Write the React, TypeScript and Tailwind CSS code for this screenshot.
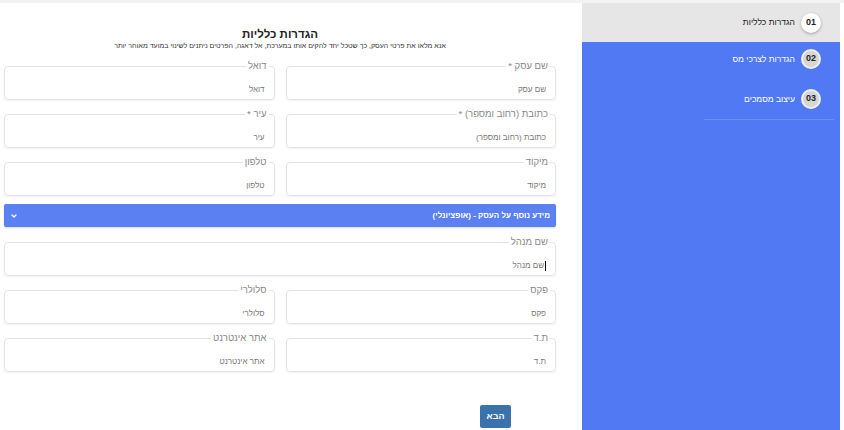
import React from "react";

type Field = { label: string; placeholder: string; required?: boolean; focused?: boolean };

const OutlinedField = ({ label, placeholder, required, focused }: Field) => (
    <fieldset className="h-[40px] rounded-[4px] border border-[#e3e3e3] pr-[5px] pl-2 shadow-[0_1px_2px_rgba(0,0,0,0.06)]">
        <legend className="px-[2px] text-[9.5px] leading-[12px] text-[#888]">
            {label}
            {required && " *"}
        </legend>
        <div className="flex justify-start pt-[13px] pr-[4px] text-[8px] leading-[10px] text-[#777]">
            <span className={focused ? "border-r border-black pr-[1px]" : ""}>{placeholder}</span>
        </div>
    </fieldset>
);

const StepItem = ({ num, title, active }: { num: string; title: string; active?: boolean }) => (
    <div className="flex items-center gap-[6px] pr-[19px]">
        <div
            className={
                active
                    ? "flex h-[20px] w-[20px] items-center justify-center rounded-full bg-white text-[9px] font-bold text-[#222] shadow-[0_1px_3px_rgba(0,0,0,0.3)]"
                    : "flex h-[20px] w-[20px] items-center justify-center rounded-full border-2 border-[#eef0f6] bg-[#d6d6d6] text-[9px] font-bold text-[#222]"
            }
        >
            {num}
        </div>
        <span className={active ? "text-[8.5px] text-[#222]" : "text-[8.5px] text-white"}>{title}</span>
    </div>
);

const App = () => {
    const topFields: Field[][] = [
        [
            { label: "שם עסק", placeholder: "שם עסק", required: true },
            { label: "דואל", placeholder: "דואל" },
        ],
        [
            { label: "כתובת (רחוב ומספר)", placeholder: "כתובת (רחוב ומספר)", required: true },
            { label: "עיר", placeholder: "עיר", required: true },
        ],
        [
            { label: "מיקוד", placeholder: "מיקוד" },
            { label: "טלפון", placeholder: "טלפון" },
        ],
    ];

    const extraFields: Field[][] = [
        [
            { label: "פקס", placeholder: "פקס" },
            { label: "סלולרי", placeholder: "סלולרי" },
        ],
        [
            { label: "ת.ד", placeholder: "ת.ד" },
            { label: "אתר אינטרנט", placeholder: "אתר אינטרנט" },
        ],
    ];

    return (
        <div
            dir="rtl"
            className="flex h-[430px] w-[844px] flex-col overflow-hidden bg-white"
            style={{ fontFamily: '"Liberation Sans", "DejaVu Sans", sans-serif' }}
        >
            <div className="h-[3px] bg-[#f3f3f3]" />
            <div className="flex flex-1 pr-[4px]">
                {/* Steps sidebar */}
                <aside className="flex w-[258px] flex-col bg-[#5079f3]">
                    <div className="flex h-[39px] items-center bg-[#e6e6e6]">
                        <StepItem num="01" title="הגדרות כלליות" active />
                    </div>
                    <div className="flex flex-col gap-[20px] pt-[7px]">
                        <StepItem num="02" title="הגדרות לצרכי מס" />
                        <StepItem num="03" title="עיצוב מסמכים" />
                    </div>
                    <div className="mr-[6px] ml-[122px] mt-[10px] h-px bg-[#6a8ef4]" />
                </aside>

                <div className="w-[22px]" />

                {/* Form */}
                <main className="flex w-[560px] flex-col px-[4px]">
                    <div className="flex flex-col items-center pt-[24px]">
                        <h1 className="text-[11.5px] leading-[14px] font-bold text-[#222]">הגדרות כלליות</h1>
                        <p className="text-[7px] leading-[10px] text-[#333]">
                            אנא מלאו את פרטי העסק, כך שטכל יחד להקים אותו במערכת, אל דאגה, הפרטים ניתנים לשינוי במועד מאוחר יותר
                        </p>
                    </div>

                    <div className="mt-[9px] flex flex-col gap-[8px]">
                        {topFields.map((row, i) => (
                            <div key={i} className="grid grid-cols-2 gap-[11px]">
                                {row.map((f) => (
                                    <OutlinedField key={f.label} {...f} />
                                ))}
                            </div>
                        ))}
                    </div>

                    {/* Optional section header */}
                    <div className="mt-[8px] flex h-[23px] items-center justify-between rounded-[2px] bg-[#5a80f2] pr-[6px] pl-[6px] text-white shadow-[0_1px_2px_rgba(0,0,0,0.15)]">
                        <span className="text-[8px] font-bold">מידע נוסף על העסק - (אופציונלי)</span>
                        <svg width="8" height="8" viewBox="0 0 24 24" fill="none" stroke="white" strokeWidth="4" strokeLinecap="round" strokeLinejoin="round">
                            <path d="M6 9l6 6 6-6" />
                        </svg>
                    </div>

                    <div className="mt-[9px] flex flex-col gap-[8px]">
                        <OutlinedField label="שם מנהל" placeholder="שם מנהל" focused />
                        {extraFields.map((row, i) => (
                            <div key={i} className="grid grid-cols-2 gap-[11px]">
                                {row.map((f) => (
                                    <OutlinedField key={f.label} {...f} />
                                ))}
                            </div>
                        ))}
                    </div>

                    <div className="mt-[33px] flex pr-[45px]">
                        <button className="h-[23px] w-[31px] rounded-[2px] bg-[#3a72ad] text-[9px] font-bold text-white">הבא</button>
                    </div>
                </main>
            </div>
        </div>
    );
};

export default App;
